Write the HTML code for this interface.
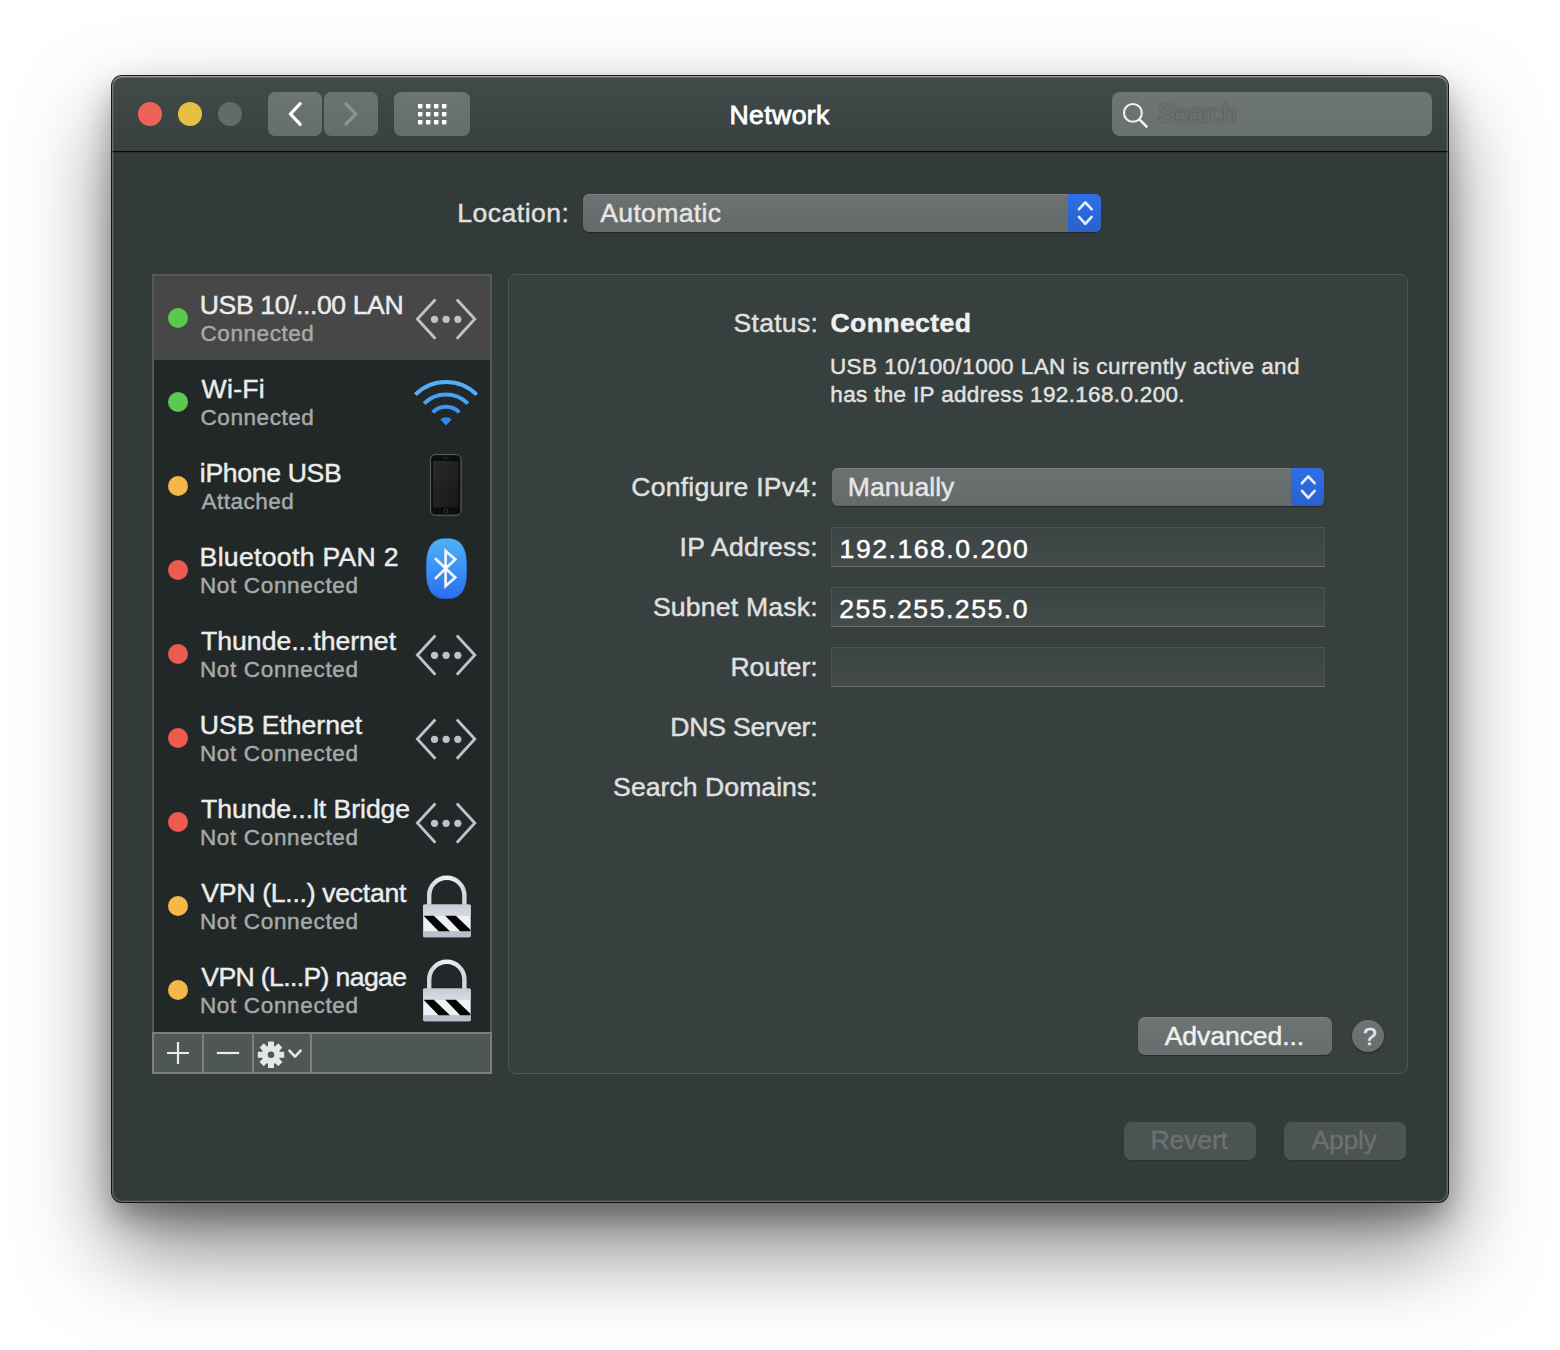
<!DOCTYPE html>
<html lang="en">
<head>
<meta charset="utf-8">
<title>Network</title>
<style>
html,body{margin:0;padding:0}
body{width:1560px;height:1350px;background:#fff;overflow:hidden;position:relative;font-family:"Liberation Sans",sans-serif;-webkit-font-smoothing:antialiased}
div,span,i,b,svg{position:absolute;display:block;box-sizing:border-box}
.t{white-space:nowrap;font-style:normal;-webkit-text-stroke:.45px currentColor}
.window{border-radius:10px;background:#323a3a;
  box-shadow:0 0 0 1px rgba(8,10,10,.94),0 16px 30px rgba(0,0,0,.30),0 45px 90px rgba(0,0,0,.50)}
.window:after{content:"";position:absolute;left:0;top:0;right:0;bottom:0;border-radius:10px;box-shadow:inset 0 1px 0 rgba(255,255,255,.22),inset 0 2px 0 rgba(255,255,255,.10),inset 0 0 0 1px rgba(255,255,255,.20),inset 0 0 0 2px rgba(255,255,255,.07);pointer-events:none}
.titlebar{border-radius:10px 10px 0 0;background:linear-gradient(#424a4a,#383f3f);border-bottom:1px solid #040606;box-shadow:0 1px 0 rgba(0,0,0,.18)}
.tl{width:24px;height:24px;border-radius:50%}
.tl.red{background:#ee6358}
.tl.yellow{background:#e6bf45}
.tl.gray{background:#626a6a}
.tbtn{border-radius:7px;background:linear-gradient(#6c7474,#656d6d)}
.tbtn.dim{background:linear-gradient(#6a7272,#636b6b)}
.tbtn svg{left:0;top:0}
.search{border-radius:8px;background:linear-gradient(#6d7575,#687070)}
.popup{border-radius:6px;background:linear-gradient(#6c7171,#646969);box-shadow:0 1px 1px rgba(0,0,0,.35),inset 0 1px 0 rgba(255,255,255,.10);overflow:hidden}
.popup .blue{right:0;top:0;width:33px;height:100%;background:linear-gradient(#2e6fe6,#2a61cd);font-weight:normal}
.popup .chev{left:0;top:0}
.sidebar{background:#232929;border:2px solid #555959}
.list{background:#222828;overflow:hidden}
.row{left:0;width:336px;height:84px}
.row.sel{background:#474747}
.dot{width:20px;height:20px;border-radius:50%}
.dot.g{background:#5bc94e}
.dot.y{background:#f4b748}
.dot.r{background:#ed5a50}
.sbar{background:#7a8080}
.sbar .sb{top:2px;height:38px;background:#4f5656}
.sbar .sb svg{left:0;top:0}
.panel{border-radius:8px;background:#373f3f;border:1px solid #4f5757}
.field{background:linear-gradient(#3c4343,#444b4b);border:1px solid #4c5353;border-bottom-color:#6a7070}
.btn{border-radius:7px;background:linear-gradient(#6e7474,#676d6d);box-shadow:0 1px 1px rgba(0,0,0,.35),inset 0 1px 0 rgba(255,255,255,.08)}
.btn.off{background:#4c5353;box-shadow:0 1px 1px rgba(0,0,0,.15)}
.help{border-radius:50%;background:linear-gradient(#6f7575,#676d6d);box-shadow:0 1px 2px rgba(0,0,0,.4)}

</style>
</head>
<body>
<div class="window" style="left:112px;top:76px;width:1336px;height:1126px;">
<div class="titlebar" style="left:0px;top:0px;width:1336px;height:76px;">
<i class="tl red" style="left:26px;top:26px"></i>
<i class="tl yellow" style="left:66px;top:26px"></i>
<i class="tl gray" style="left:106px;top:26px"></i>
<div class="tbtn" style="left:156px;top:16px;width:54px;height:44px;"><svg width="54" height="44" viewBox="0 0 54 44"><path d="M32.2 11.6 L22.5 22 L32.2 32.4" fill="none" stroke="#fff" stroke-width="3.2" stroke-linecap="round" stroke-linejoin="miter"/></svg></div>
<div class="tbtn dim" style="left:212px;top:16px;width:54px;height:44px;"><svg width="54" height="44" viewBox="0 0 54 44"><path d="M21.9 11.9 L31.7 22 L21.9 32.1" fill="none" stroke="#8d9494" stroke-width="3.2" stroke-linecap="round" stroke-linejoin="miter"/></svg></div>
<div class="tbtn" style="left:282px;top:16px;width:76px;height:44px;"><svg width="76" height="44" viewBox="0 0 76 44" fill="#fff"><rect x="24" y="12" width="4.4" height="4.4"/><rect x="32" y="12" width="4.4" height="4.4"/><rect x="40" y="12" width="4.4" height="4.4"/><rect x="48" y="12" width="4.4" height="4.4"/><rect x="24" y="20" width="4.4" height="4.4"/><rect x="32" y="20" width="4.4" height="4.4"/><rect x="40" y="20" width="4.4" height="4.4"/><rect x="48" y="20" width="4.4" height="4.4"/><rect x="24" y="28" width="4.4" height="4.4"/><rect x="32" y="28" width="4.4" height="4.4"/><rect x="40" y="28" width="4.4" height="4.4"/><rect x="48" y="28" width="4.4" height="4.4"/></svg></div>
<span class="t" id="t_title" style="left:617.5px;top:25.5px;font-size:26.6px;line-height:26.6px;color:#ffffff;font-weight:400;letter-spacing:0.393px;-webkit-text-stroke:.85px #fff;">Network</span><div class="search" style="left:1000px;top:16px;width:320px;height:44px;"><svg width="44" height="44" viewBox="0 0 44 44" style="position:absolute;left:0;top:0"><circle cx="20.9" cy="20.9" r="8.9" fill="none" stroke="#f2f2f2" stroke-width="2.1"/><path d="M27.6 27.6 L34.5 34.5" stroke="#f2f2f2" stroke-width="2.6" stroke-linecap="round"/></svg><span class="t" id="t_search" style="left:46.1px;top:7.5px;font-size:26.6px;line-height:26.6px;color:#6f7474;font-weight:400;letter-spacing:-1.101px;-webkit-text-stroke:.8px #676c6c;text-shadow:0 0 1.5px rgba(45,50,50,.9);">Search</span></div>
</div>
<span class="t" id="t_location" style="left:345.2px;top:123.5px;font-size:26.6px;line-height:26.6px;color:#e0e0e0;font-weight:400;letter-spacing:0.483px;">Location:</span><div class="popup" style="left:471px;top:118px;width:518px;height:38px;"><b class="blue"><svg class="chev" width="33" height="38" viewBox="0 0 33 38"><path d="M11 15.2 L17.3 8.4 L23.6 15.2 M11 22.9 L17.3 29.8 L23.6 22.9" fill="none" stroke="#e4edff" stroke-width="2.7" stroke-linecap="round" stroke-linejoin="round"/></svg></b><span class="t" id="t_automatic" style="left:17.3px;top:5.5px;font-size:26.6px;line-height:26.6px;color:#e6e6e6;font-weight:400;letter-spacing:0.300px;">Automatic</span></div>
<div class="sidebar" style="left:40px;top:198px;width:340px;height:800px;">
<div class="list" style="left:0;top:0;width:336px;height:756px">
<div class="row sel" style="top:0px"><i class="dot g" style="left:14px;top:32px"></i><span class="t" id="t_r0a" style="left:45.8px;top:15.5px;font-size:26.6px;line-height:26.6px;color:#ececec;font-weight:400;letter-spacing:-0.406px;">USB 10/...00 LAN</span><span class="t" id="t_r0b" style="left:46.5px;top:47.3px;font-size:22.5px;line-height:22.5px;color:#a9a9a9;font-weight:400;letter-spacing:0.568px;">Connected</span><svg class="ico" style="left:258px;top:19px" width="68" height="48" viewBox="0 0 68 48"><path d="M23.4 4.5 L5.4 24 L23.4 43.7 M44.8 4.5 L62.8 24 L44.8 43.7" fill="none" stroke="#c2c1c9" stroke-width="2.8" stroke-linecap="butt" stroke-linejoin="miter"/><circle cx="22.5" cy="24.3" r="3.6" fill="#c2c1c9"/><circle cx="34.1" cy="24.3" r="3.6" fill="#c2c1c9"/><circle cx="45.8" cy="24.3" r="3.6" fill="#c2c1c9"/></svg></div>
<div class="row" style="top:84px"><i class="dot g" style="left:14px;top:32px"></i><span class="t" id="t_r1a" style="left:47.5px;top:15.5px;font-size:26.6px;line-height:26.6px;color:#ececec;font-weight:400;letter-spacing:0.309px;">Wi-Fi</span><span class="t" id="t_r1b" style="left:46.5px;top:47.3px;font-size:22.5px;line-height:22.5px;color:#a9a9a9;font-weight:400;letter-spacing:0.568px;">Connected</span><svg class="ico" style="left:258px;top:16px" width="68" height="52" viewBox="0 0 68 52"><defs><linearGradient id="wg" x1="0" y1="0" x2="0" y2="1"><stop offset="0" stop-color="#56b2f8"/><stop offset="1" stop-color="#2d83ee"/></linearGradient></defs><g fill="none" stroke="url(#wg)" stroke-width="4"><path d="M3.3 18.6 A43.4 43.4 0 0 1 64.7 18.6" stroke="#52aef7"/><path d="M12.1 27.6 A31 31 0 0 1 55.9 27.6" stroke="#48a2f4"/><path d="M20.7 36.3 A18.8 18.8 0 0 1 47.3 36.3" stroke="#3e96f2"/></g><path d="M28.4 43.6 A7.8 7.8 0 0 1 39.6 43.6 L34 49.6 Z" fill="#3388ef"/></svg></div>
<div class="row" style="top:168px"><i class="dot y" style="left:14px;top:32px"></i><span class="t" id="t_r2a" style="left:45.8px;top:15.5px;font-size:26.6px;line-height:26.6px;color:#ececec;font-weight:400;letter-spacing:-0.323px;">iPhone USB</span><span class="t" id="t_r2b" style="left:47.5px;top:47.3px;font-size:22.5px;line-height:22.5px;color:#a9a9a9;font-weight:400;letter-spacing:0.497px;">Attached</span><svg class="ico" style="left:275px;top:9px" width="34" height="64" viewBox="0 0 34 64"><defs><linearGradient id="pg" x1="0" y1="0" x2="1" y2="1"><stop offset="0" stop-color="#2a2a2a"/><stop offset="1" stop-color="#171717"/></linearGradient></defs><rect x="1.6" y="1.6" width="30.4" height="60.6" rx="4.6" fill="#0d0d0d" stroke="#62666a" stroke-width="1"/><rect x="4" y="8" width="25.6" height="46.4" fill="url(#pg)"/><circle cx="16.8" cy="57.8" r="2" fill="none" stroke="#3c3c3c" stroke-width=".8"/><rect x="13.4" y="4.4" width="6.8" height="1" rx=".5" fill="#333"/></svg></div>
<div class="row" style="top:252px"><i class="dot r" style="left:14px;top:32px"></i><span class="t" id="t_r3a" style="left:45.6px;top:15.5px;font-size:26.6px;line-height:26.6px;color:#ececec;font-weight:400;letter-spacing:0.307px;">Bluetooth PAN 2</span><span class="t" id="t_r3b" style="left:45.9px;top:47.3px;font-size:22.5px;line-height:22.5px;color:#a9a9a9;font-weight:400;letter-spacing:0.669px;">Not Connected</span><svg class="ico" style="left:270px;top:9.399999999999977px" width="46" height="64" viewBox="0 0 46 64"><defs><linearGradient id="bg" x1="0" y1="0" x2="0" y2="1"><stop offset="0" stop-color="#4fb1f5"/><stop offset=".5" stop-color="#3b92f2"/><stop offset="1" stop-color="#2a6df2"/></linearGradient></defs><path d="M42.8 31.6 L42.7 36.5 L42.6 39.8 L42.3 42.7 L41.9 45.2 L41.4 47.5 L40.7 49.6 L40.0 51.5 L39.2 53.3 L38.2 54.9 L37.1 56.3 L35.9 57.6 L34.6 58.7 L33.2 59.6 L31.7 60.3 L30.0 60.9 L28.0 61.4 L25.8 61.6 L22.5 61.7 L19.2 61.6 L17.0 61.4 L15.0 60.9 L13.3 60.3 L11.8 59.6 L10.4 58.7 L9.1 57.6 L7.9 56.3 L6.8 54.9 L5.8 53.3 L5.0 51.5 L4.3 49.6 L3.6 47.5 L3.1 45.2 L2.7 42.7 L2.4 39.8 L2.3 36.5 L2.2 31.6 L2.3 26.7 L2.4 23.4 L2.7 20.5 L3.1 18.0 L3.6 15.7 L4.3 13.6 L5.0 11.7 L5.8 9.9 L6.8 8.3 L7.9 6.9 L9.1 5.6 L10.4 4.5 L11.8 3.6 L13.3 2.9 L15.0 2.3 L17.0 1.8 L19.2 1.6 L22.5 1.5 L25.8 1.6 L28.0 1.8 L30.0 2.3 L31.7 2.9 L33.2 3.6 L34.6 4.5 L35.9 5.6 L37.1 6.9 L38.2 8.3 L39.2 9.9 L40.0 11.7 L40.7 13.6 L41.4 15.7 L41.9 18.0 L42.3 20.5 L42.6 23.4 L42.7 26.7 Z" fill="url(#bg)" stroke="#1f5fd0" stroke-opacity=".35" stroke-width=".8"/><path d="M11 21.2 L31.2 40.5 L21.6 49 L21.6 13.9 L31.2 22.2 L11 41.9" fill="none" stroke="#f1f5fc" stroke-width="2.7" stroke-linejoin="miter" stroke-miterlimit="6"/></svg></div>
<div class="row" style="top:336px"><i class="dot r" style="left:14px;top:32px"></i><span class="t" id="t_r4a" style="left:47.1px;top:15.5px;font-size:26.6px;line-height:26.6px;color:#ececec;font-weight:400;letter-spacing:-0.015px;">Thunde...thernet</span><span class="t" id="t_r4b" style="left:45.9px;top:47.3px;font-size:22.5px;line-height:22.5px;color:#a9a9a9;font-weight:400;letter-spacing:0.669px;">Not Connected</span><svg class="ico" style="left:258px;top:19px" width="68" height="48" viewBox="0 0 68 48"><path d="M23.4 4.5 L5.4 24 L23.4 43.7 M44.8 4.5 L62.8 24 L44.8 43.7" fill="none" stroke="#c2c1c9" stroke-width="2.8" stroke-linecap="butt" stroke-linejoin="miter"/><circle cx="22.5" cy="24.3" r="3.6" fill="#c2c1c9"/><circle cx="34.1" cy="24.3" r="3.6" fill="#c2c1c9"/><circle cx="45.8" cy="24.3" r="3.6" fill="#c2c1c9"/></svg></div>
<div class="row" style="top:420px"><i class="dot r" style="left:14px;top:32px"></i><span class="t" id="t_r5a" style="left:45.8px;top:15.5px;font-size:26.6px;line-height:26.6px;color:#ececec;font-weight:400;letter-spacing:-0.026px;">USB Ethernet</span><span class="t" id="t_r5b" style="left:45.9px;top:47.3px;font-size:22.5px;line-height:22.5px;color:#a9a9a9;font-weight:400;letter-spacing:0.669px;">Not Connected</span><svg class="ico" style="left:258px;top:19px" width="68" height="48" viewBox="0 0 68 48"><path d="M23.4 4.5 L5.4 24 L23.4 43.7 M44.8 4.5 L62.8 24 L44.8 43.7" fill="none" stroke="#c2c1c9" stroke-width="2.8" stroke-linecap="butt" stroke-linejoin="miter"/><circle cx="22.5" cy="24.3" r="3.6" fill="#c2c1c9"/><circle cx="34.1" cy="24.3" r="3.6" fill="#c2c1c9"/><circle cx="45.8" cy="24.3" r="3.6" fill="#c2c1c9"/></svg></div>
<div class="row" style="top:504px"><i class="dot r" style="left:14px;top:32px"></i><span class="t" id="t_r6a" style="left:47.1px;top:15.5px;font-size:26.6px;line-height:26.6px;color:#ececec;font-weight:400;letter-spacing:-0.051px;">Thunde...lt Bridge</span><span class="t" id="t_r6b" style="left:45.9px;top:47.3px;font-size:22.5px;line-height:22.5px;color:#a9a9a9;font-weight:400;letter-spacing:0.669px;">Not Connected</span><svg class="ico" style="left:258px;top:19px" width="68" height="48" viewBox="0 0 68 48"><path d="M23.4 4.5 L5.4 24 L23.4 43.7 M44.8 4.5 L62.8 24 L44.8 43.7" fill="none" stroke="#c2c1c9" stroke-width="2.8" stroke-linecap="butt" stroke-linejoin="miter"/><circle cx="22.5" cy="24.3" r="3.6" fill="#c2c1c9"/><circle cx="34.1" cy="24.3" r="3.6" fill="#c2c1c9"/><circle cx="45.8" cy="24.3" r="3.6" fill="#c2c1c9"/></svg></div>
<div class="row" style="top:588px"><i class="dot y" style="left:14px;top:32px"></i><span class="t" id="t_r7a" style="left:47.3px;top:15.5px;font-size:26.6px;line-height:26.6px;color:#ececec;font-weight:400;letter-spacing:-0.283px;">VPN (L...) vectant</span><span class="t" id="t_r7b" style="left:45.9px;top:47.3px;font-size:22.5px;line-height:22.5px;color:#a9a9a9;font-weight:400;letter-spacing:0.669px;">Not Connected</span><svg class="ico" style="left:266.6px;top:9.100000000000023px" width="52" height="66" viewBox="0 0 52 66"><defs><linearGradient id="lk7" x1="0" y1="0" x2="0" y2="1"><stop offset="0" stop-color="#c6cbd4"/><stop offset="1" stop-color="#d8dbe2"/></linearGradient><linearGradient id="ls7" x1="0" y1="0" x2="1" y2="0"><stop offset="0" stop-color="#d3d7de"/><stop offset=".5" stop-color="#f0f2f5"/><stop offset="1" stop-color="#d3d7de"/></linearGradient></defs><path d="M8.2 33 L8.2 22.4 A17.6 17.6 0 0 1 43.4 22.4 L43.4 33" fill="none" stroke="url(#ls7)" stroke-width="4.4"/><rect x="2" y="31.6" width="47.8" height="32.6" rx="1.6" fill="#b4bac6"/><rect x="2" y="31.6" width="47.8" height="11.2" rx="1.4" fill="url(#lk7)"/><rect x="2.6" y="42.8" width="46.6" height="15.6" fill="#eef1f6"/><path d="M2.6 42.8 L12.8 42.8 L29.2 58.4 L17.8 58.4 Z M24.2 42.8 L34.8 42.8 L49.2 56.6 L49.2 58.4 L39.4 58.4 Z" fill="#050505"/><rect x="2" y="58.4" width="47.8" height="5.8" rx="1.4" fill="#b9bfcc"/></svg></div>
<div class="row" style="top:672px"><i class="dot y" style="left:14px;top:32px"></i><span class="t" id="t_r8a" style="left:47.3px;top:15.5px;font-size:26.6px;line-height:26.6px;color:#ececec;font-weight:400;letter-spacing:-0.632px;">VPN (L...P) nagae</span><span class="t" id="t_r8b" style="left:45.9px;top:47.3px;font-size:22.5px;line-height:22.5px;color:#a9a9a9;font-weight:400;letter-spacing:0.669px;">Not Connected</span><svg class="ico" style="left:266.6px;top:9.100000000000023px" width="52" height="66" viewBox="0 0 52 66"><defs><linearGradient id="lk8" x1="0" y1="0" x2="0" y2="1"><stop offset="0" stop-color="#c6cbd4"/><stop offset="1" stop-color="#d8dbe2"/></linearGradient><linearGradient id="ls8" x1="0" y1="0" x2="1" y2="0"><stop offset="0" stop-color="#d3d7de"/><stop offset=".5" stop-color="#f0f2f5"/><stop offset="1" stop-color="#d3d7de"/></linearGradient></defs><path d="M8.2 33 L8.2 22.4 A17.6 17.6 0 0 1 43.4 22.4 L43.4 33" fill="none" stroke="url(#ls8)" stroke-width="4.4"/><rect x="2" y="31.6" width="47.8" height="32.6" rx="1.6" fill="#b4bac6"/><rect x="2" y="31.6" width="47.8" height="11.2" rx="1.4" fill="url(#lk8)"/><rect x="2.6" y="42.8" width="46.6" height="15.6" fill="#eef1f6"/><path d="M2.6 42.8 L12.8 42.8 L29.2 58.4 L17.8 58.4 Z M24.2 42.8 L34.8 42.8 L49.2 56.6 L49.2 58.4 L39.4 58.4 Z" fill="#050505"/><rect x="2" y="58.4" width="47.8" height="5.8" rx="1.4" fill="#b9bfcc"/></svg></div>
</div>
<div class="sbar" style="left:-2px;top:756px;width:340px;height:42px"><div class="sb" style="left:2px;width:48px"><svg width="48" height="38" viewBox="0 0 48 38"><path d="M13 19 H35 M24 8 V30" stroke="#ececec" stroke-width="2.2" fill="none"/></svg></div><div class="sb" style="left:52px;width:48px"><svg width="48" height="38" viewBox="0 0 48 38"><path d="M12.8 19 H35.2" stroke="#ececec" stroke-width="2.2" fill="none"/></svg></div><div class="sb" style="left:102px;width:56px"><svg width="56" height="38" viewBox="0 0 56 38"><g transform="translate(17,20.8)" fill="#e6e6e6"><rect x="-3" y="-13.2" width="6" height="8" rx=".6" transform="rotate(0)"/><rect x="-3" y="-13.2" width="6" height="8" rx=".6" transform="rotate(45)"/><rect x="-3" y="-13.2" width="6" height="8" rx=".6" transform="rotate(90)"/><rect x="-3" y="-13.2" width="6" height="8" rx=".6" transform="rotate(135)"/><rect x="-3" y="-13.2" width="6" height="8" rx=".6" transform="rotate(180)"/><rect x="-3" y="-13.2" width="6" height="8" rx=".6" transform="rotate(225)"/><rect x="-3" y="-13.2" width="6" height="8" rx=".6" transform="rotate(270)"/><rect x="-3" y="-13.2" width="6" height="8" rx=".6" transform="rotate(315)"/><circle r="9.3"/><circle r="3.3" fill="#4f5656"/></g><path d="M35.4 16.6 L41 22.6 L46.6 16.6" fill="none" stroke="#e6e6e6" stroke-width="2.6" stroke-linecap="round" stroke-linejoin="round"/></svg></div><div class="sb last" style="left:160px;width:178px"></div></div>
</div>
<div class="panel" style="left:396px;top:198px;width:900px;height:800px;">
<span class="t" id="t_status" style="left:224.6px;top:35.0px;font-size:26.6px;line-height:26.6px;color:#e0e0e0;font-weight:400;letter-spacing:0.244px;">Status:</span><span class="t" id="t_connected" style="left:321.5px;top:35.0px;font-size:26.6px;line-height:26.6px;color:#f0f0f0;font-weight:700;letter-spacing:0.374px;">Connected</span><span class="t" id="t_desc1" style="left:320.9px;top:81.0px;font-size:22.5px;line-height:22.5px;color:#e2e2e2;font-weight:400;letter-spacing:0.433px;">USB 10/100/1000 LAN is currently active and</span><span class="t" id="t_desc2" style="left:321.3px;top:108.5px;font-size:22.5px;line-height:22.5px;color:#e2e2e2;font-weight:400;letter-spacing:0.335px;">has the IP address 192.168.0.200.</span><span class="t" id="t_cfg" style="left:122.3px;top:198.5px;font-size:26.6px;line-height:26.6px;color:#e0e0e0;font-weight:400;letter-spacing:0.220px;">Configure IPv4:</span><div class="popup" style="left:323px;top:193px;width:492px;height:38px;"><b class="blue"><svg class="chev" width="33" height="38" viewBox="0 0 33 38"><path d="M11 15.2 L17.3 8.4 L23.6 15.2 M11 22.9 L17.3 29.8 L23.6 22.9" fill="none" stroke="#e4edff" stroke-width="2.7" stroke-linecap="round" stroke-linejoin="round"/></svg></b><span class="t" id="t_manually" style="left:15.8px;top:5.5px;font-size:26.6px;line-height:26.6px;color:#e6e6e6;font-weight:400;letter-spacing:0.027px;">Manually</span></div>
<span class="t" id="t_ip" style="left:170.6px;top:258.5px;font-size:26.6px;line-height:26.6px;color:#e0e0e0;font-weight:400;letter-spacing:0.249px;">IP Address:</span><div class="field" style="left:322px;top:252px;width:494px;height:40px;"><span class="t" id="t_ipv" style="left:7.6px;top:7.8px;font-size:26.6px;line-height:26.6px;color:#ffffff;font-weight:400;letter-spacing:1.521px;">192.168.0.200</span></div>
<span class="t" id="t_mask" style="left:143.9px;top:318.5px;font-size:26.6px;line-height:26.6px;color:#e0e0e0;font-weight:400;letter-spacing:0.200px;">Subnet Mask:</span><div class="field" style="left:322px;top:312px;width:494px;height:40px;"><span class="t" id="t_maskv" style="left:7.2px;top:7.8px;font-size:26.6px;line-height:26.6px;color:#ffffff;font-weight:400;letter-spacing:1.517px;">255.255.255.0</span></div>
<span class="t" id="t_router" style="left:221.4px;top:378.5px;font-size:26.6px;line-height:26.6px;color:#e0e0e0;font-weight:400;letter-spacing:0.006px;">Router:</span><div class="field" style="left:322px;top:372px;width:494px;height:40px;"></div>
<span class="t" id="t_dns" style="left:161.2px;top:438.5px;font-size:26.6px;line-height:26.6px;color:#e0e0e0;font-weight:400;letter-spacing:-0.188px;">DNS Server:</span><span class="t" id="t_sd" style="left:104.1px;top:498.5px;font-size:26.6px;line-height:26.6px;color:#e0e0e0;font-weight:400;letter-spacing:0.044px;">Search Domains:</span><div class="btn" style="left:629px;top:742px;width:194px;height:38px;"><span class="t" id="t_adv" style="left:26.7px;top:5.5px;font-size:26.6px;line-height:26.6px;color:#f0f0f0;font-weight:400;letter-spacing:-0.089px;">Advanced...</span></div>
<div class="help" style="left:843px;top:745px;width:32px;height:32px;"><span class="t" id="t_q" style="left:11.0px;top:4.6px;font-size:24.6px;line-height:24.6px;color:#e8e8e8;font-weight:400;letter-spacing:-4.943px;">?</span></div>
</div>
<div class="btn off" style="left:1012px;top:1046px;width:132px;height:38px;"><span class="t" id="t_revert" style="left:26.6px;top:5.1px;font-size:26.6px;line-height:26.6px;color:#6b7170;font-weight:400;letter-spacing:-0.194px;">Revert</span></div>
<div class="btn off" style="left:1172px;top:1046px;width:122px;height:38px;"><span class="t" id="t_apply" style="left:27.5px;top:5.1px;font-size:26.6px;line-height:26.6px;color:#6b7170;font-weight:400;letter-spacing:-0.289px;">Apply</span></div>
</div>
</body>
</html>
